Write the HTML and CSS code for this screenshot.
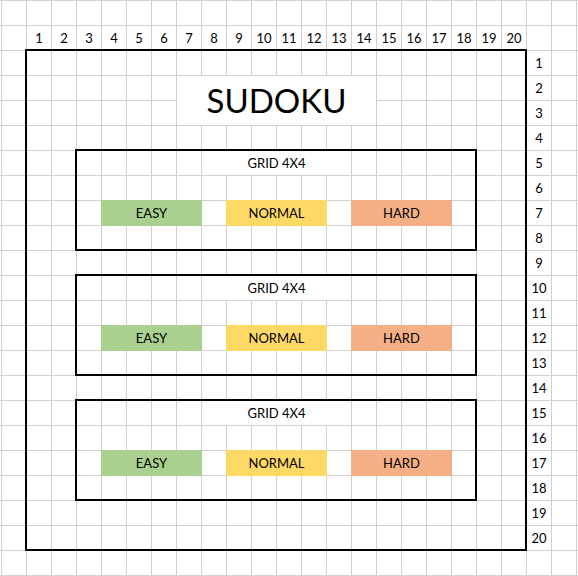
FILE: index.html
```html
<!DOCTYPE html>
<html lang="en">
<head>
<meta charset="utf-8">
<meta name="viewport" content="width=device-width, initial-scale=1">
<title>Sudoku</title>
<link rel="stylesheet" href="styles.css">
</head>
<body>
<main class="sheet">
  <ol class="ruler ruler-columns">
    <li>1</li><li>2</li><li>3</li><li>4</li><li>5</li><li>6</li><li>7</li><li>8</li><li>9</li><li>10</li>
    <li>11</li><li>12</li><li>13</li><li>14</li><li>15</li><li>16</li><li>17</li><li>18</li><li>19</li><li>20</li>
  </ol>
  <div class="board">
    <h1 class="title">SUDOKU</h1>
    <section class="panel">
      <h2 class="panel-title">GRID 4X4</h2>
      <div class="levels">
        <button class="level easy" type="button">EASY</button>
        <button class="level normal" type="button">NORMAL</button>
        <button class="level hard" type="button">HARD</button>
      </div>
    </section>
    <section class="panel">
      <h2 class="panel-title">GRID 4X4</h2>
      <div class="levels">
        <button class="level easy" type="button">EASY</button>
        <button class="level normal" type="button">NORMAL</button>
        <button class="level hard" type="button">HARD</button>
      </div>
    </section>
    <section class="panel">
      <h2 class="panel-title">GRID 4X4</h2>
      <div class="levels">
        <button class="level easy" type="button">EASY</button>
        <button class="level normal" type="button">NORMAL</button>
        <button class="level hard" type="button">HARD</button>
      </div>
    </section>
  </div>
  <ol class="ruler ruler-rows">
    <li>1</li><li>2</li><li>3</li><li>4</li><li>5</li><li>6</li><li>7</li><li>8</li><li>9</li><li>10</li>
    <li>11</li><li>12</li><li>13</li><li>14</li><li>15</li><li>16</li><li>17</li><li>18</li><li>19</li><li>20</li>
  </ol>
</main>
</body>
</html>
```
FILE: styles.css
```css
:root {
  --cell: 25px;
  --line: #d0d0d0;
}

* {
  box-sizing: border-box;
}

body {
  margin: 0;
  min-height: 100vh;
  color: #000;
  font: 13px/24px Lato, "Open Sans", sans-serif;
  background-color: #fff;
  background-image:
    linear-gradient(to right, var(--line) 1px, transparent 1px),
    linear-gradient(to bottom, var(--line) 1px, transparent 1px);
  background-size: var(--cell) var(--cell);
  background-position: 1px 0;
}

.sheet {
  display: grid;
  grid-template-columns: max-content var(--cell);
  padding: 25px 0 0 26px;
}

.ruler {
  display: grid;
  margin: 0;
  padding: 0;
  list-style: none;
  text-align: center;
}

.ruler li {
  padding: 1px 0 0 1px;
}

.ruler-columns {
  grid-template-columns: repeat(20, var(--cell));
}

.ruler-rows {
  grid-row: 2;
  grid-template-rows: repeat(20, var(--cell));
}

/* Outlines straddle the cell lines, as thick cell borders do. */
.board,
.panel {
  outline: 2px solid #000;
  outline-offset: -1px;
}

.board {
  grid-row: 2;
  display: flex;
  flex-direction: column;
  gap: var(--cell);
  padding: 25px 50px 50px;
}

/* Merged cells hide the lines inside them and keep the ones around them. */
.title,
.panel-title {
  margin: 0 auto;
  border: 0 solid transparent;
  border-width: 1px 0 0 1px;
  background: #fff;
  background-clip: padding-box;
  font-weight: 400;
  text-align: center;
}

.title {
  width: 200px;
  font-size: 33px;
  line-height: 49px;
}

.panel {
  padding-bottom: 25px;
}

.panel-title {
  width: 150px;
  font-size: 13px;
  line-height: 24px;
}

.levels {
  display: flex;
  justify-content: space-between;
  margin: 25px 24px 0 25px;
}

.level {
  width: 101px;
  height: 26px;
  margin-bottom: -1px;
  padding: 0;
  border: 0;
  border-radius: 0;
  color: #000;
  font: inherit;
  text-align: center;
}

.easy {
  background: #a9d08e;
}

.normal {
  background: #ffd966;
}

.hard {
  background: #f4b084;
}
```
